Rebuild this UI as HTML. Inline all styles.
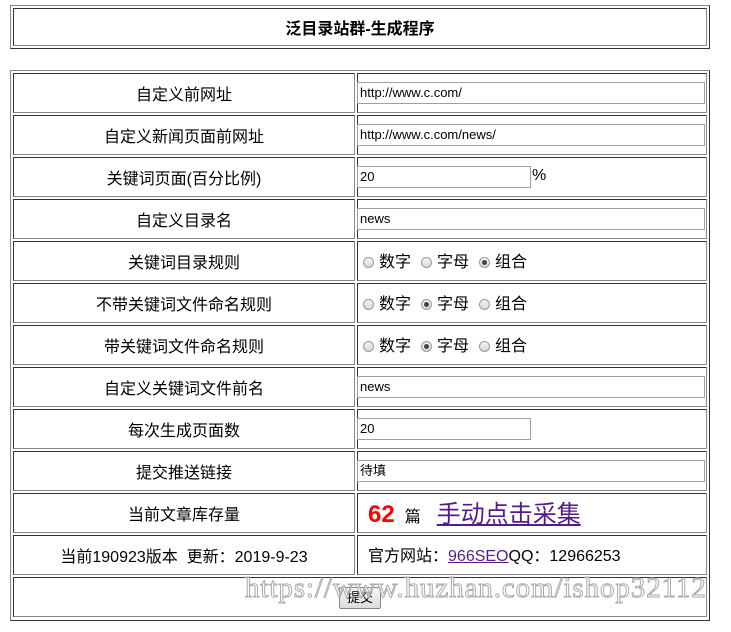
<!DOCTYPE html>
<html><head><meta charset="utf-8"><style>
body{margin:0;background:#fff;font-family:"Liberation Sans","Noto Sans CJK SC",sans-serif;color:#000;position:relative;width:731px;height:632px;overflow:hidden}
.box{position:absolute;box-sizing:border-box}
.outer{border:1px solid #888;border-right-color:#333;border-bottom-color:#333}
.cell{border:1px solid #333;border-right-color:#888;border-bottom-color:#888;box-sizing:border-box;position:absolute}
.l{font-size:16px;display:flex;align-items:center;justify-content:center}
.r{font-size:16px;line-height:34px;padding-top:4px;white-space:nowrap}
.inp{position:absolute;box-sizing:border-box;border:1px solid #a0a0a0;height:22px;font-size:13px;line-height:20px;padding-left:2px;background:#fff}
.rad{display:inline-block;width:11px;height:11px;border-radius:50%;border:1px solid #999;background:linear-gradient(#f4f4f4,#d8d8d8);box-sizing:border-box;margin:0 5px 0 10px;position:relative;top:1px}
.rad.f{margin-left:5px}
.rad.on::after{content:"";position:absolute;left:2px;top:2px;width:5px;height:5px;border-radius:50%;background:#444}
a{color:#551a8b}
</style></head><body>
<div class="box outer" style="left:10px;top:5px;width:700px;height:44px"></div>
<div class="cell" style="left:13px;top:8px;width:694px;height:38px;font-weight:bold;font-size:16px;display:flex;align-items:center;justify-content:center">泛目录站群-生成程序</div>
<div class="box outer" style="left:10px;top:70px;width:700px;height:551px"></div>

<div class="cell l" style="left:13px;top:73px;width:342px;height:40px">自定义前网址</div>
<div class="cell r" style="left:357px;top:73px;width:350px;height:40px"></div>
<div class="inp" style="left:357px;top:82px;width:348px">http://www.c.com/</div>

<div class="cell l" style="left:13px;top:115px;width:342px;height:40px">自定义新闻页面前网址</div>
<div class="cell r" style="left:357px;top:115px;width:350px;height:40px"></div>
<div class="inp" style="left:357px;top:124px;width:348px">http://www.c.com/news/</div>

<div class="cell l" style="left:13px;top:157px;width:342px;height:40px">关键词页面(百分比例)</div>
<div class="cell r" style="left:357px;top:157px;width:350px;height:40px"></div>
<div class="inp" style="left:357px;top:166px;width:174px">20</div>
<div class="box" style="left:532px;top:167px;font-size:16px">%</div>

<div class="cell l" style="left:13px;top:199px;width:342px;height:40px">自定义目录名</div>
<div class="cell r" style="left:357px;top:199px;width:350px;height:40px"></div>
<div class="inp" style="left:357px;top:208px;width:348px">news</div>

<div class="cell l" style="left:13px;top:241px;width:342px;height:40px">关键词目录规则</div>
<div class="cell r" style="left:357px;top:241px;width:350px;height:40px"><span class="rad f"></span>数字<span class="rad"></span>字母<span class="rad on"></span>组合</div>

<div class="cell l" style="left:13px;top:283px;width:342px;height:40px">不带关键词文件命名规则</div>
<div class="cell r" style="left:357px;top:283px;width:350px;height:40px"><span class="rad f"></span>数字<span class="rad on"></span>字母<span class="rad"></span>组合</div>

<div class="cell l" style="left:13px;top:325px;width:342px;height:40px">带关键词文件命名规则</div>
<div class="cell r" style="left:357px;top:325px;width:350px;height:40px"><span class="rad f"></span>数字<span class="rad on"></span>字母<span class="rad"></span>组合</div>

<div class="cell l" style="left:13px;top:367px;width:342px;height:40px">自定义关键词文件前名</div>
<div class="cell r" style="left:357px;top:367px;width:350px;height:40px"></div>
<div class="inp" style="left:357px;top:376px;width:348px">news</div>

<div class="cell l" style="left:13px;top:409px;width:342px;height:40px">每次生成页面数</div>
<div class="cell r" style="left:357px;top:409px;width:350px;height:40px"></div>
<div class="inp" style="left:357px;top:418px;width:174px">20</div>

<div class="cell l" style="left:13px;top:451px;width:342px;height:40px">提交推送链接</div>
<div class="cell r" style="left:357px;top:451px;width:350px;height:40px"></div>
<div class="inp" style="left:357px;top:460px;width:348px">待填</div>

<div class="cell l" style="left:13px;top:493px;width:342px;height:40px">当前文章库存量</div>
<div class="cell r" style="left:357px;top:493px;width:350px;height:40px;padding-left:10px"><b style="color:#f00;font-size:24px">62</b><span style="margin-left:10px;font-size:16px">篇</span><a href="#" style="margin-left:16px;font-size:24px">手动点击采集</a></div>

<div class="cell l" style="left:13px;top:535px;width:342px;height:40px">当前190923版本&nbsp; 更新：2019-9-23</div>
<div class="cell r" style="left:357px;top:535px;width:350px;height:40px;padding-left:10px">官方网站：<a href="#">966SEO</a>QQ：12966253</div>

<div class="cell" style="left:13px;top:577px;width:694px;height:40px"></div>
<div class="box" style="left:339px;top:587px;width:42px;height:22px;border:1px solid #888;border-radius:2px;background:linear-gradient(#f6f6f6,#dcdcdc);font-size:13px;text-align:center;line-height:20px">提交</div>
<div class="box" style="left:245px;top:572px;font-family:'Liberation Serif',serif;font-size:29px;color:rgba(255,255,255,0.5);-webkit-text-stroke:1px #aaa;letter-spacing:0.9px;white-space:nowrap">https://www.huzhan.com/ishop32112</div>
</body></html>
